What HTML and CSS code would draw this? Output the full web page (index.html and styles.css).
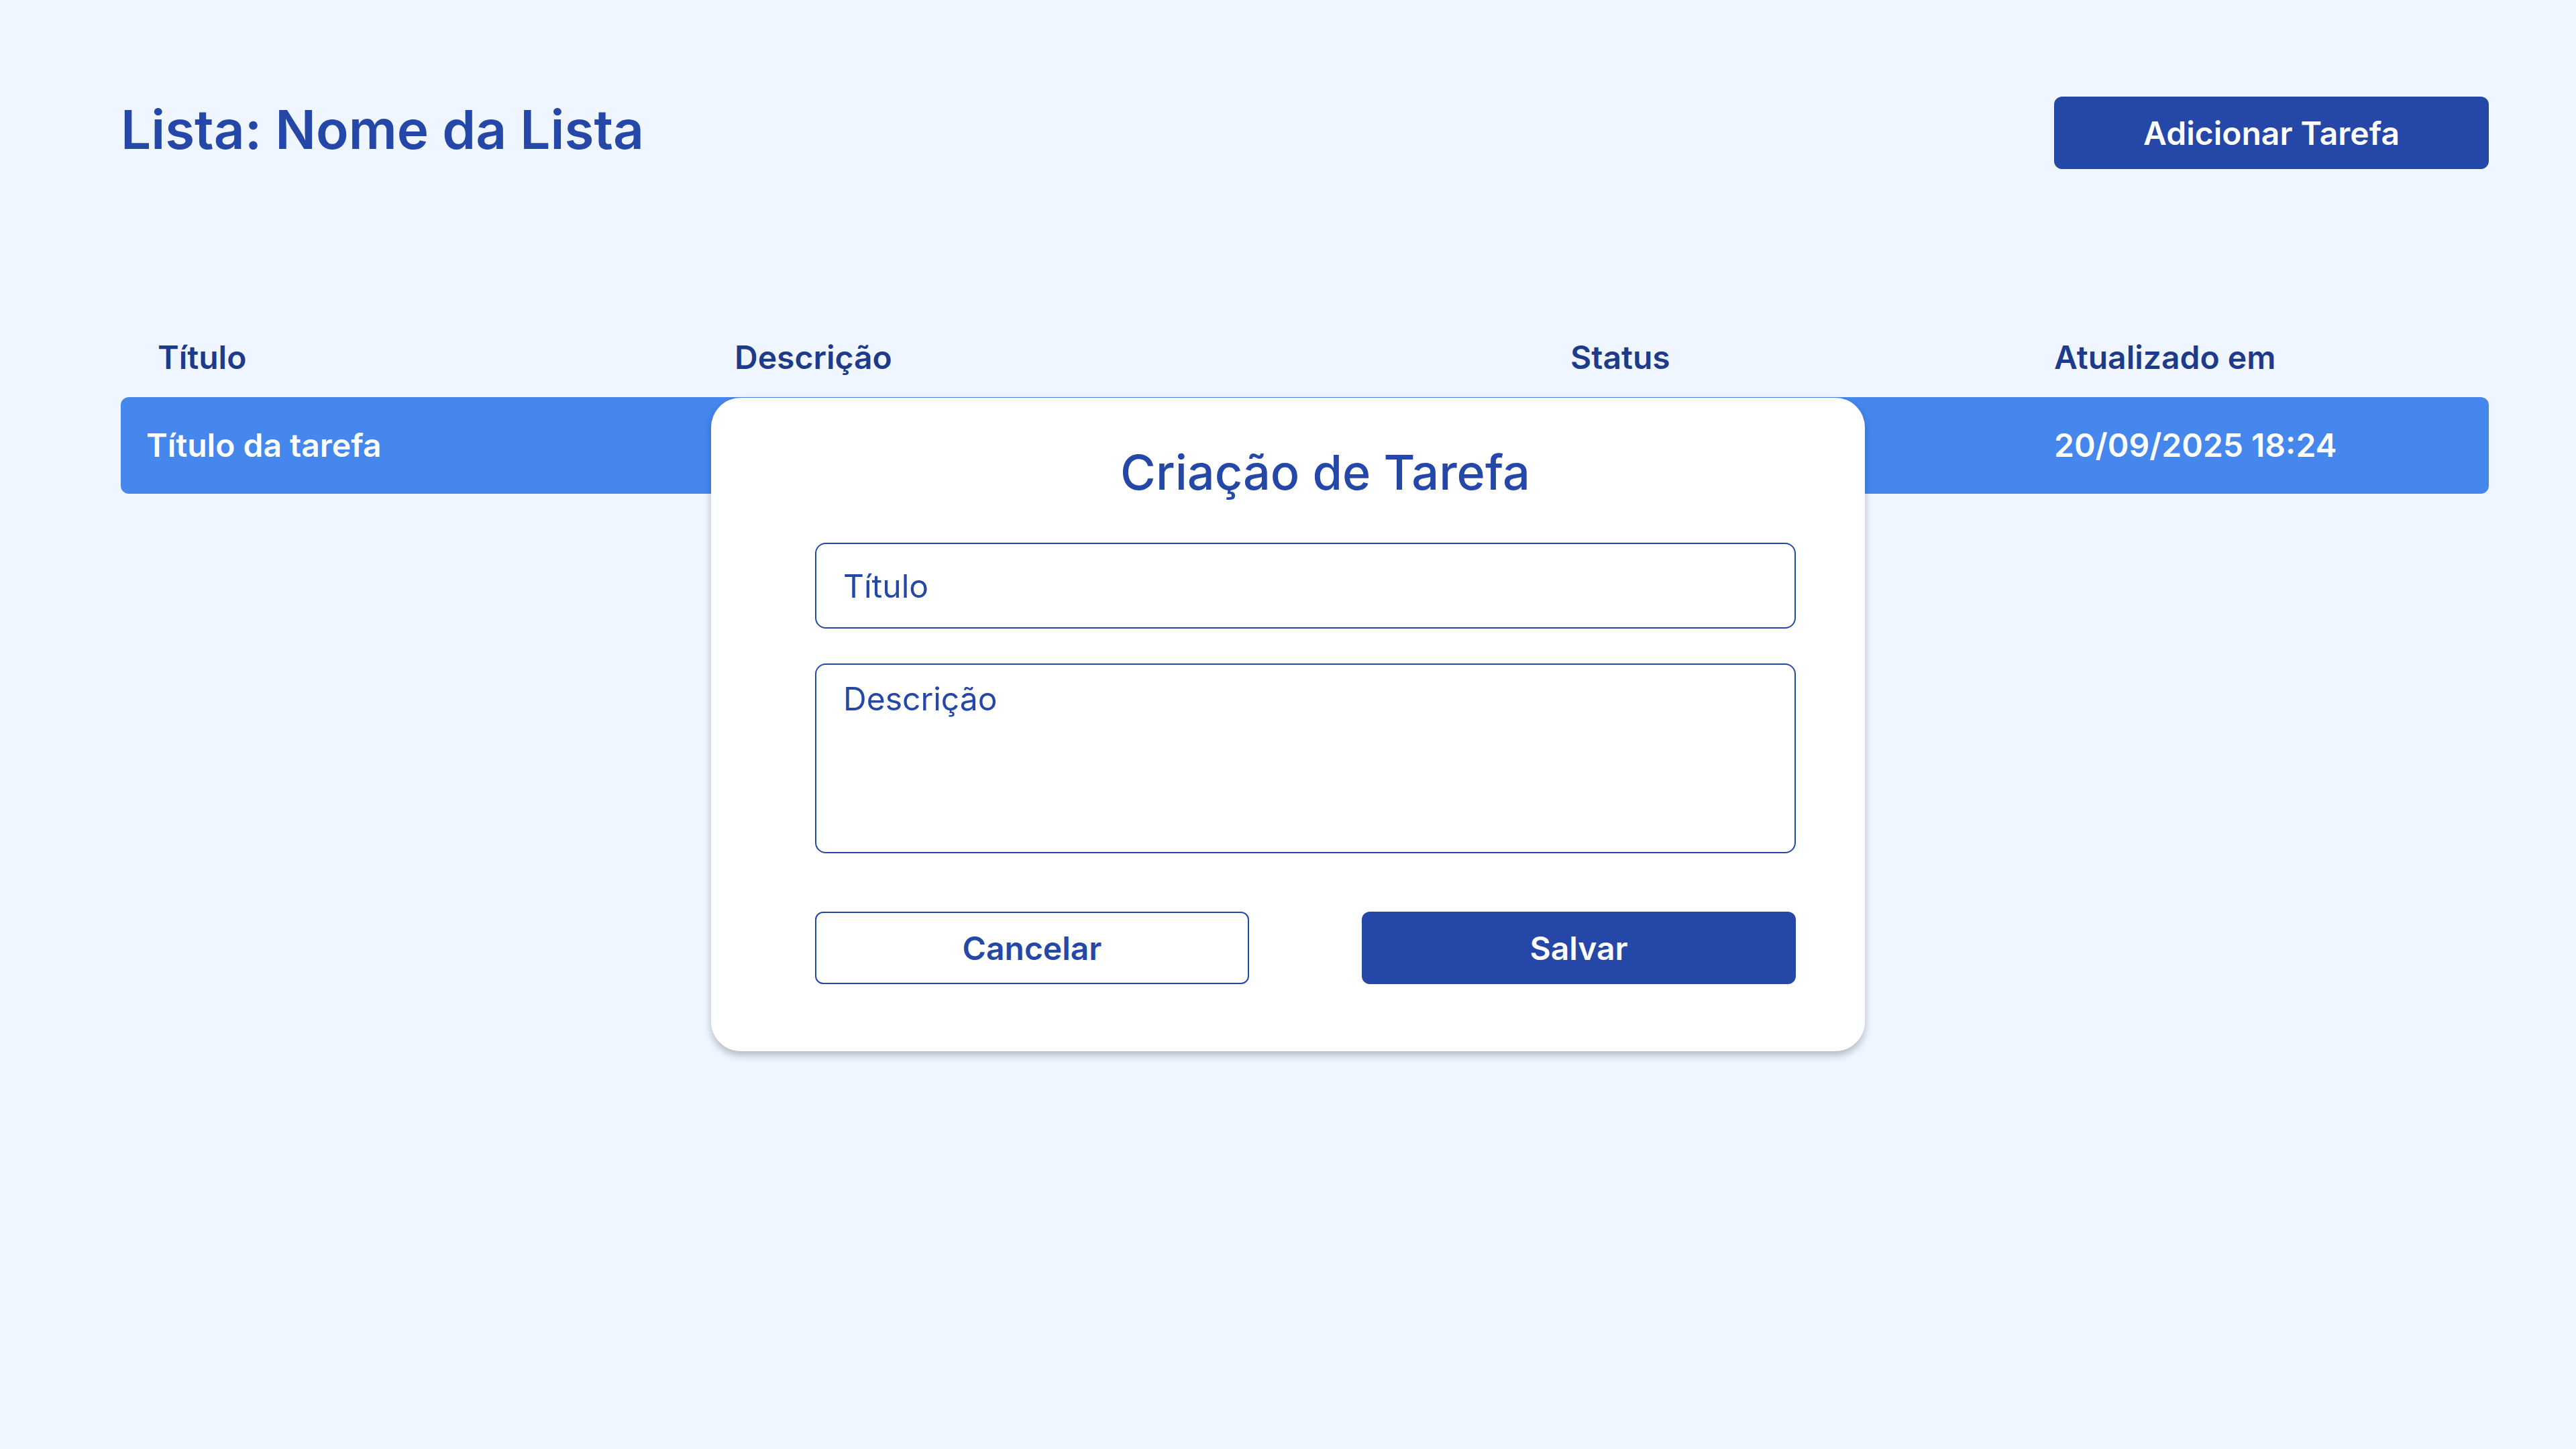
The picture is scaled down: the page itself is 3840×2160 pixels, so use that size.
FILE: index.html
```html
<!DOCTYPE html>
<html lang="pt-BR">
<head>
<meta charset="utf-8">
<title>Lista: Nome da Lista</title>
<link rel="stylesheet" href="styles.css">
</head>
<body>
<div class="page">
  <header class="topbar">
    <h1 class="page-title">Lista: Nome da Lista</h1>
    <button class="btn btn-primary btn-add" type="button">Adicionar Tarefa</button>
  </header>

  <section class="table">
    <div class="table-head">
      <div class="th th-first">Título</div>
      <div class="th">Descrição</div>
      <div class="th">Status</div>
      <div class="th">Atualizado em</div>
    </div>
    <div class="table-row">
      <div class="td td-first">Título da tarefa</div>
      <div class="td"></div>
      <div class="td"></div>
      <div class="td">20/09/2025 18:24</div>
    </div>
  </section>
</div>

<div class="overlay">
  <form class="modal">
    <h2 class="modal-title">Criação de Tarefa</h2>
    <input class="field field-input" type="text" placeholder="Título">
    <textarea class="field field-textarea" placeholder="Descrição"></textarea>
    <div class="modal-actions">
      <button class="btn btn-outline btn-modal" type="button">Cancelar</button>
      <button class="btn btn-primary btn-modal" type="button">Salvar</button>
    </div>
  </form>
</div>
</body>
</html>
```

FILE: styles.css
```css
* {
  box-sizing: border-box;
}

html, body {
  margin: 0;
  padding: 0;
}

body {
  background: #eff6ff;
  font-family: Inter, "Noto Sans", "Liberation Sans", sans-serif;
  color: #2447a8;
  width: 3840px;
  height: 2160px;
  overflow: hidden;
}

.page {
  padding: 144px 130px 0 180px;
}

.topbar {
  display: flex;
  justify-content: space-between;
  align-items: flex-start;
}

.page-title {
  margin: 0;
  font-size: 80px;
  line-height: 98px;
  font-weight: 600;
  color: #2447a8;
}

.btn {
  font-family: inherit;
  font-size: 48px;
  font-weight: 600;
  border-radius: 12px;
  cursor: pointer;
  display: flex;
  align-items: center;
  justify-content: center;
  padding: 0;
}

.btn-primary {
  background: #2447a8;
  color: #ffffff;
  border: none;
}

.btn-outline {
  background: #ffffff;
  color: #2447a8;
  border: 2px solid #2447a8;
}

.btn-add {
  width: 648px;
  height: 108px;
}

.table {
  margin-top: 252px;
}

.table-head,
.table-row {
  display: grid;
  grid-template-columns: 915px 1246px 721px 1fr;
}

.table-head {
  padding-bottom: 30px;
}

.th {
  font-size: 48px;
  line-height: 58px;
  font-weight: 600;
  color: #1e3a8a;
}

.th-first {
  padding-left: 55px;
}

.table-row {
  height: 144px;
  background: #4587ed;
  border-radius: 12px;
  align-items: center;
}

.td {
  font-size: 48px;
  line-height: 58px;
  font-weight: 600;
  color: #ffffff;
}

.td-first {
  padding-left: 38px;
}

.overlay {
  position: fixed;
  inset: 0;
  display: flex;
  align-items: center;
  justify-content: center;
}

.modal {
  width: 1720px;
  background: #ffffff;
  border-radius: 44px;
  box-shadow: 0 6px 12px rgba(0, 0, 0, 0.25);
  padding: 67px 103px 100px 155px;
  display: flex;
  flex-direction: column;
}

.modal-title {
  margin: 0 0 62px 0;
  padding-left: 59px;
  text-align: center;
  font-size: 72px;
  line-height: 87px;
  font-weight: 500;
  color: #2447a8;
}

.field {
  display: block;
  width: 100%;
  font-family: inherit;
  font-size: 48px;
  line-height: 58px;
  font-weight: 400;
  color: #2447a8;
  background: #ffffff;
  border: 2px solid #2447a8;
  border-radius: 16px;
  outline: none;
  margin: 0;
}

.field::placeholder {
  color: #2447a8;
  opacity: 1;
}

.field-input {
  height: 128px;
  padding: 0 40px;
}

.field-textarea {
  height: 283px;
  margin-top: 52px;
  padding: 22px 40px;
  resize: none;
}

.modal-actions {
  margin-top: 87px;
  display: flex;
  justify-content: space-between;
}

.btn-modal {
  width: 647px;
  height: 108px;
}
```
